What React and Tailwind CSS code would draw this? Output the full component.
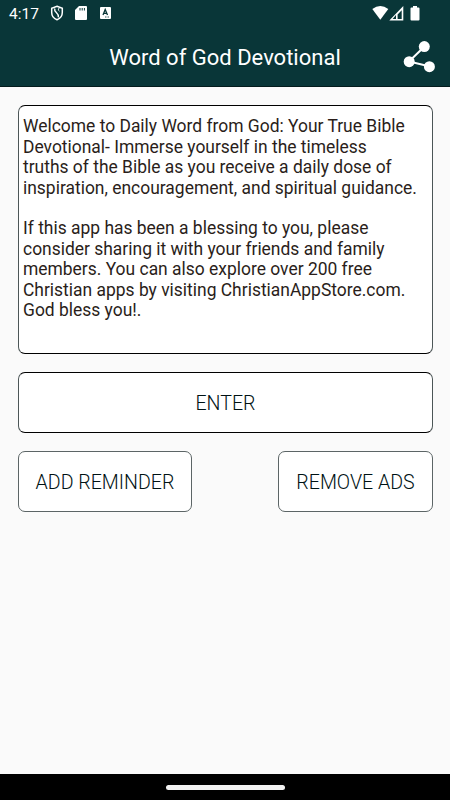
const welcomeLines = [
  "Welcome to Daily Word from God: Your True Bible",
  "Devotional- Immerse yourself in the timeless",
  "truths of the Bible as you receive a daily dose of",
  "inspiration, encouragement, and spiritual guidance.",
];

const shareLines = [
  "If this app has been a blessing to you, please",
  "consider sharing it with your friends and family",
  "members. You can also explore over 200 free",
  "Christian apps by visiting ChristianAppStore.com.",
  "God bless you!.",
];

const Paragraph = ({ lines }) => (
  <p>
    {lines.map((line) => (
      <span key={line} className="block whitespace-nowrap">
        {line}
      </span>
    ))}
  </p>
);

const StatusBar = () => (
  <div className="flex h-[27px] items-center justify-between pl-[9px] pr-[29px] text-white">
    <div className="flex items-center">
      <span className="w-[41px] pt-[2px] text-[15.5px] leading-none">4:17</span>
      <svg className="-mt-px" width="14" height="16" viewBox="0 0 14 16" fill="none" stroke="#fff" strokeWidth="1.5">
        <path d="M7 1.2L12.3 3.2V7.5C12.3 11 10 13.6 7 14.7C4 13.6 1.7 11 1.7 7.5V3.2Z" />
        <path d="M4.8 3.4C3.4 7.5 9.2 7.6 8.4 12.4" strokeWidth="1.4" />
        <path d="M9.2 3C7.8 4.5 8.4 5.4 9.4 6.2" strokeWidth="1" />
      </svg>
      <svg className="-mt-px ml-[11px]" width="12" height="14" viewBox="0 0 12 14">
        <path d="M4 0H11Q12 0 12 1V13Q12 14 11 14H1Q0 14 0 13V4Z" fill="#fff" />
        <path d="M5 2V4.5M7.2 2V4.5M9.4 2V4.5" stroke="#093638" strokeWidth="1" />
      </svg>
      <svg className="-mt-px ml-[13px]" width="11" height="12" viewBox="0 0 11 12">
        <rect width="11" height="12" rx="1" fill="#fff" />
        <path d="M3 8L5.2 2.5L7.5 8M4 6.3H6.7" stroke="#093638" strokeWidth="1.3" fill="none" />
        <path d="M5 10H9" stroke="#093638" strokeWidth="0.8" strokeDasharray="1 0.5" />
      </svg>
    </div>
    <div className="flex items-center">
      <svg className="-mt-px" width="17" height="14" viewBox="0 0 17 14" fill="#fff">
        <path d="M0.3 3Q8.3 -3 16.3 3L8.3 13.7Z" />
      </svg>
      <svg className="-mt-px" width="15" height="15" viewBox="0 0 15 15">
        <path
          fillRule="evenodd"
          d="M14.3 0V14.5H0.3ZM12.7 4.3L8.6 8.4V12.9H12.7ZM7 8.9L3.6 12.9H7Z"
          fill="#fff"
        />
      </svg>
      <svg className="-mt-px ml-[6px] mr-px" width="10" height="15" viewBox="0 0 10 15" fill="#fff">
        <path d="M3 0H7V1.5H8.5Q9.5 1.5 9.5 2.5V13.5Q9.5 14.5 8.5 14.5H1.5Q0.5 14.5 0.5 13.5V2.5Q0.5 1.5 1.5 1.5H3Z" />
      </svg>
    </div>
  </div>
);

const ShareIcon = () => (
  <svg width="32" height="32" viewBox="0 0 32 32" fill="#fff">
    <path d="M21.5 5.5L6 20.5L27 25.5" fill="none" stroke="#fff" strokeWidth="2" />
    <circle cx="21.3" cy="5.6" r="5.5" />
    <circle cx="6.2" cy="20.7" r="5.5" />
    <circle cx="26.4" cy="25.7" r="5.5" />
  </svg>
);

const OutlineButton = ({ className = "", children }) => (
  <button
    className={`h-[61px] rounded-[7px] border bg-white pt-[2px] text-[19.6px] font-light leading-none text-[#001214] ${className}`}
  >
    {children}
  </button>
);

const App = () => {
  return (
    <div className="flex h-[800px] w-[450px] flex-col overflow-hidden bg-[#fafafa] font-['Roboto',sans-serif]">
      <header className="h-[87px] border-b border-[#041c1d] bg-[#093638]">
        <StatusBar />
        <div className="grid h-[60px] grid-cols-[50px_1fr_50px] items-center">
          <h1 className="col-start-2 pt-[2px] text-center text-[22px] leading-none text-white">
            Word of God Devotional
          </h1>
          <button aria-label="Share" className="pl-[3px]">
            <ShareIcon />
          </button>
        </div>
      </header>

      <main className="flex flex-1 flex-col gap-[18px] pl-[18px] pr-[17px] pt-[18px]">
        <section className="h-[249px] space-y-[20.4px] rounded-[7px] border border-x-[#4c5657] border-y-black bg-white pl-[4px] pt-[10.4px] text-[17.45px] leading-[20.4px] text-[#2a1e1a]">
          <Paragraph lines={welcomeLines} />
          <Paragraph lines={shareLines} />
        </section>
        <OutlineButton className="w-full border-x-[#4c5657] border-y-black">ENTER</OutlineButton>
        <div className="flex justify-between">
          <OutlineButton className="w-[174px] border-[#5c6566]">ADD REMINDER</OutlineButton>
          <OutlineButton className="w-[155px] border-[#5c6566]">REMOVE ADS</OutlineButton>
        </div>
      </main>

      <footer className="flex h-[26px] items-center justify-center bg-black">
        <div className="h-[5px] w-[119px] rounded-full bg-[#f2f2f2]" />
      </footer>
    </div>
  );
};

export default App;
